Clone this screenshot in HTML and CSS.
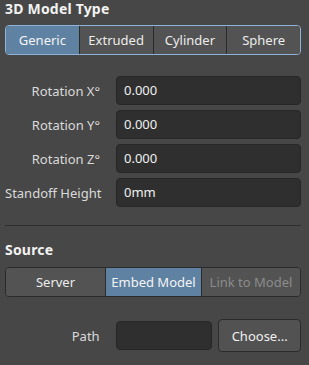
FILE: index.html
```html
<!DOCTYPE html>
<html lang="en">
<head>
  <meta charset="UTF-8">
  <title>3D Model Properties</title>
  <link rel="stylesheet" href="styles.css">
</head>
<body>

  <!-- Model type -->
  <div class="section-title">3D Model Type</div>
  <div class="segmented focused">
    <button class="seg active">Generic</button>
    <button class="seg">Extruded</button>
    <button class="seg">Cylinder</button>
    <button class="seg">Sphere</button>
  </div>

  <div class="fields">
    <label>Rotation X°</label>
    <div class="field">0.000</div>
    <label>Rotation Y°</label>
    <div class="field">0.000</div>
    <label>Rotation Z°</label>
    <div class="field">0.000</div>
    <label>Standoff Height</label>
    <div class="field">0mm</div>
  </div>

  <div class="divider"></div>

  <!-- Source -->
  <div class="section-title">Source</div>
  <div class="segmented source">
    <button class="seg">Server</button>
    <button class="seg active">Embed Model</button>
    <button class="seg disabled">Link to Model</button>
  </div>

  <div class="path-row">
    <label>Path</label>
    <div class="field"></div>
    <button class="choose">Choose...</button>
  </div>

</body>
</html>
```

FILE: styles.css
```css
body {
  margin: 0;
  padding: 0 8px 0 5px;
  width: 296px;
  height: 365px;
  background: #474747;
  font-family: 'Noto Sans', sans-serif;
  font-size: 12.5px;
  color: #dcdcdc;
  overflow: hidden;
}

.section-title {
  font-weight: bold;
  font-size: 14px;
  letter-spacing: 0.2px;
  color: #f2f2f2;
  height: 20px;
  line-height: 18px;
}

.segmented {
  display: flex;
  height: 30px;
  margin-top: 5px;
  border: 1px solid #2b2b2b;
  border-radius: 4px;
  overflow: hidden;
  box-sizing: border-box;
}

.segmented.focused {
  border-color: #8db3da;
}

.seg {
  flex: 1;
  margin: 0;
  padding: 0;
  border: none;
  border-left: 1px solid #2b2b2b;
  background: #535353;
  color: #ececec;
  font-family: inherit;
  font-size: 13px;
  white-space: nowrap;
}

.seg:first-child {
  border-left: none;
}

.seg.active {
  background: #5f82a3;
  color: #f4f4f4;
}

.seg.disabled {
  color: #8c8c8c;
}

.source .seg:nth-child(1) { flex: 0 0 99px; }
.source .seg:nth-child(2) { flex: 0 0 96px; }

.fields {
  display: grid;
  grid-template-columns: 95px 1fr;
  column-gap: 16px;
  row-gap: 5px;
  margin-top: 21px;
}

label {
  text-align: right;
  align-self: center;
  white-space: nowrap;
  color: #dadada;
  font-size: 13px;
}

.field {
  height: 29px;
  box-sizing: border-box;
  padding: 0 7px;
  line-height: 27px;
  background: #2f2f2f;
  border: 1px solid #272727;
  border-radius: 4px;
  color: #f0f0f0;
  font-size: 13px;
}

.divider {
  height: 1px;
  background: #2e2e2e;
  margin: 18px 0 15px;
}

.segmented.source {
  margin-top: 6px;
}

.path-row {
  display: flex;
  align-items: center;
  margin-top: 22px;
}

.path-row label {
  width: 95px;
}

.path-row .field {
  width: 97px;
  margin-left: 16px;
}

.choose {
  margin-left: 6px;
  width: 83px;
  height: 33px;
  padding: 0;
  background: #525252;
  border: 1px solid #2b2b2b;
  border-radius: 4px;
  color: #f0f0f0;
  font-family: inherit;
  font-size: 13px;
}
```
